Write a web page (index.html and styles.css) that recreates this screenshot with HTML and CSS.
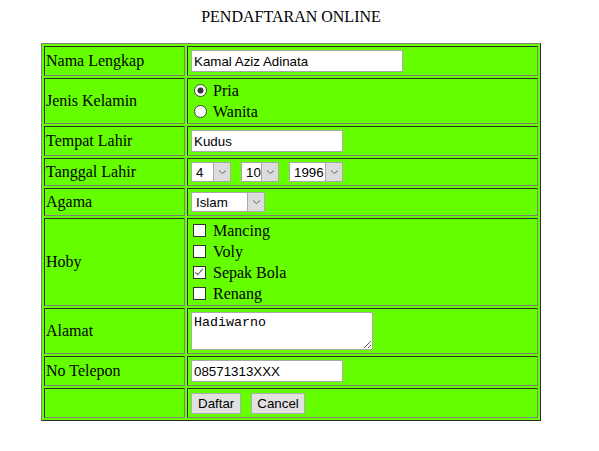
FILE: index.html
```html
<!DOCTYPE html>
<html>
<head>
<meta charset="utf-8">
<title>Pendaftaran Online</title>
<link rel="stylesheet" href="styles.css">
</head>
<body>
<div class="page">
  <div class="title">PENDAFTARAN ONLINE</div>
  <table class="form">
    <tr class="h30">
      <td class="label">Nama Lengkap</td>
      <td><input type="text" class="text wide" value="Kamal Aziz Adinata"></td>
    </tr>
    <tr class="h46">
      <td class="label">Jenis Kelamin</td>
      <td>
        <div class="opt"><input type="radio" name="jk" checked><span>Pria</span></div>
        <div class="opt"><input type="radio" name="jk"><span>Wanita</span></div>
      </td>
    </tr>
    <tr class="h30">
      <td class="label">Tempat Lahir</td>
      <td><input type="text" class="text" value="Kudus"></td>
    </tr>
    <tr class="h28">
      <td class="label">Tanggal Lahir</td>
      <td>
        <div class="sels">
          <span class="sel w-day"><select><option>4</option></select><span class="arrow"><svg width="9" height="6" viewBox="0 0 9 6"><path d="M1 1.5 L4.5 4.5 L8 1.5" fill="none" stroke="#666" stroke-width="1"/></svg></span></span>
          <span class="sel w-mon"><select><option>10</option></select><span class="arrow"><svg width="9" height="6" viewBox="0 0 9 6"><path d="M1 1.5 L4.5 4.5 L8 1.5" fill="none" stroke="#666" stroke-width="1"/></svg></span></span>
          <span class="sel w-year"><select><option>1996</option></select><span class="arrow"><svg width="9" height="6" viewBox="0 0 9 6"><path d="M1 1.5 L4.5 4.5 L8 1.5" fill="none" stroke="#666" stroke-width="1"/></svg></span></span>
        </div>
      </td>
    </tr>
    <tr class="h28">
      <td class="label">Agama</td>
      <td>
        <div class="sels">
          <span class="sel w-rel"><select><option>Islam</option></select><span class="arrow"><svg width="9" height="6" viewBox="0 0 9 6"><path d="M1 1.5 L4.5 4.5 L8 1.5" fill="none" stroke="#666" stroke-width="1"/></svg></span></span>
        </div>
      </td>
    </tr>
    <tr class="h88">
      <td class="label">Hoby</td>
      <td>
        <div class="opt"><input type="checkbox"><span>Mancing</span></div>
        <div class="opt"><input type="checkbox"><span>Voly</span></div>
        <div class="opt"><input type="checkbox" checked><span>Sepak Bola</span></div>
        <div class="opt"><input type="checkbox"><span>Renang</span></div>
      </td>
    </tr>
    <tr class="h46">
      <td class="label">Alamat</td>
      <td><textarea class="area">Hadiwarno</textarea></td>
    </tr>
    <tr class="h30">
      <td class="label">No Telepon</td>
      <td><input type="text" class="text" value="08571313XXX"></td>
    </tr>
    <tr class="h30">
      <td class="label"></td>
      <td>
        <div class="btns">
          <button class="btn">Daftar</button>
          <button class="btn btn-cancel">Cancel</button>
        </div>
      </td>
    </tr>
  </table>
</div>
</body>
</html>
```

FILE: styles.css
```css
html, body {
  margin: 0;
  padding: 0;
  background: #fff;
}
body {
  padding: 8px 25px 8px 8px;
  font-family: "Liberation Serif", "Times New Roman", serif;
  font-size: 16px;
  color: #000;
}
.page {
  width: 566px;
}
.title {
  text-align: center;
  line-height: 18px;
  height: 18px;
  margin-bottom: 17px;
}
.form {
  width: 500px;
  margin: 0 auto;
  border: 1px outset #808080;
  border-spacing: 2px;
  background: #66ff00;
}
.form td {
  border: 1px inset #808080;
  padding: 1px 2px 1px 1px;
  box-sizing: border-box;
  vertical-align: middle;
}
.form td.label {
  width: 141px;
  padding-left: 1px;
}
.h28 td { height: 28px; }
.h30 td { height: 30px; }
.h46 td { height: 46px; }
.h88 td { height: 88px; }

.text {
  display: block;
  box-sizing: border-box;
  width: 152px;
  height: 22px;
  margin: 0 0 0 2px;
  padding: 1px 2px;
  border: 1px solid #a9a9a9;
  background: #fff;
  font-family: "Liberation Sans", Arial, sans-serif;
  font-size: 13.33px;
  color: #000;
}
.text.wide { width: 212px; }

.opt {
  display: flex;
  align-items: center;
  height: 21px;
}
.opt span {
  line-height: 21px;
}
.opt input {
  appearance: none;
  -webkit-appearance: none;
  box-sizing: border-box;
  width: 13px;
  height: 13px;
  background: #fff;
  position: relative;
}
.opt input[type="radio"] {
  margin: 0 6px 0 5px;
  border: 1px solid #444;
  border-radius: 50%;
}
.opt input[type="radio"]:checked {
  background: radial-gradient(circle, #333 0, #333 2.6px, #d0d0d0 3.2px, #fff 4px);
}
.opt input[type="checkbox"] {
  margin: 0 7px 0 4px;
  border: 1px solid #333;
  border-radius: 0;
}
.opt input[type="checkbox"]:checked::after {
  content: "";
  position: absolute;
  left: 3px;
  top: 0px;
  width: 3px;
  height: 7px;
  border-right: 1.5px solid #555;
  border-bottom: 1.5px solid #555;
  transform: rotate(40deg);
}

.sels {
  display: flex;
  gap: 10px;
  padding-left: 2px;
}
.sel {
  position: relative;
  display: block;
  height: 20px;
  box-sizing: border-box;
}
.sel select {
  appearance: none;
  -webkit-appearance: none;
  box-sizing: border-box;
  width: 100%;
  height: 20px;
  margin: 0;
  padding: 0 0 0 4px;
  border: 1px solid #a9a9a9;
  background: #fff;
  font-family: "Liberation Sans", Arial, sans-serif;
  font-size: 13.33px;
  color: #000;
}
.sel .arrow {
  position: absolute;
  right: 1px;
  top: 1px;
  width: 16px;
  height: 18px;
  background: #dcdcdc;
  border-left: 1px solid #a9a9a9;
  display: flex;
  align-items: center;
  justify-content: center;
}
.w-day { width: 40px; }
.w-mon { width: 38px; }
.w-year { width: 54px; }
.w-rel { width: 74px; }

.area {
  display: block;
  box-sizing: border-box;
  width: 182px;
  height: 38px;
  margin: 0 0 0 2px;
  padding: 2px;
  border: 1px solid #a9a9a9;
  background: #fff;
  font-family: "Liberation Mono", "Courier New", monospace;
  font-size: 13.33px;
  line-height: 15px;
  color: #000;
  resize: both;
}

.btns {
  display: flex;
  gap: 10px;
  padding-left: 2px;
}
.btn {
  box-sizing: border-box;
  height: 21px;
  margin: 0;
  padding: 0 6px;
  border: 1px solid #adadad;
  background: #e1e1e1;
  font-family: "Liberation Sans", Arial, sans-serif;
  font-size: 13.33px;
  color: #000;
}
.btn-cancel {
  padding: 0 5px;
}
```
